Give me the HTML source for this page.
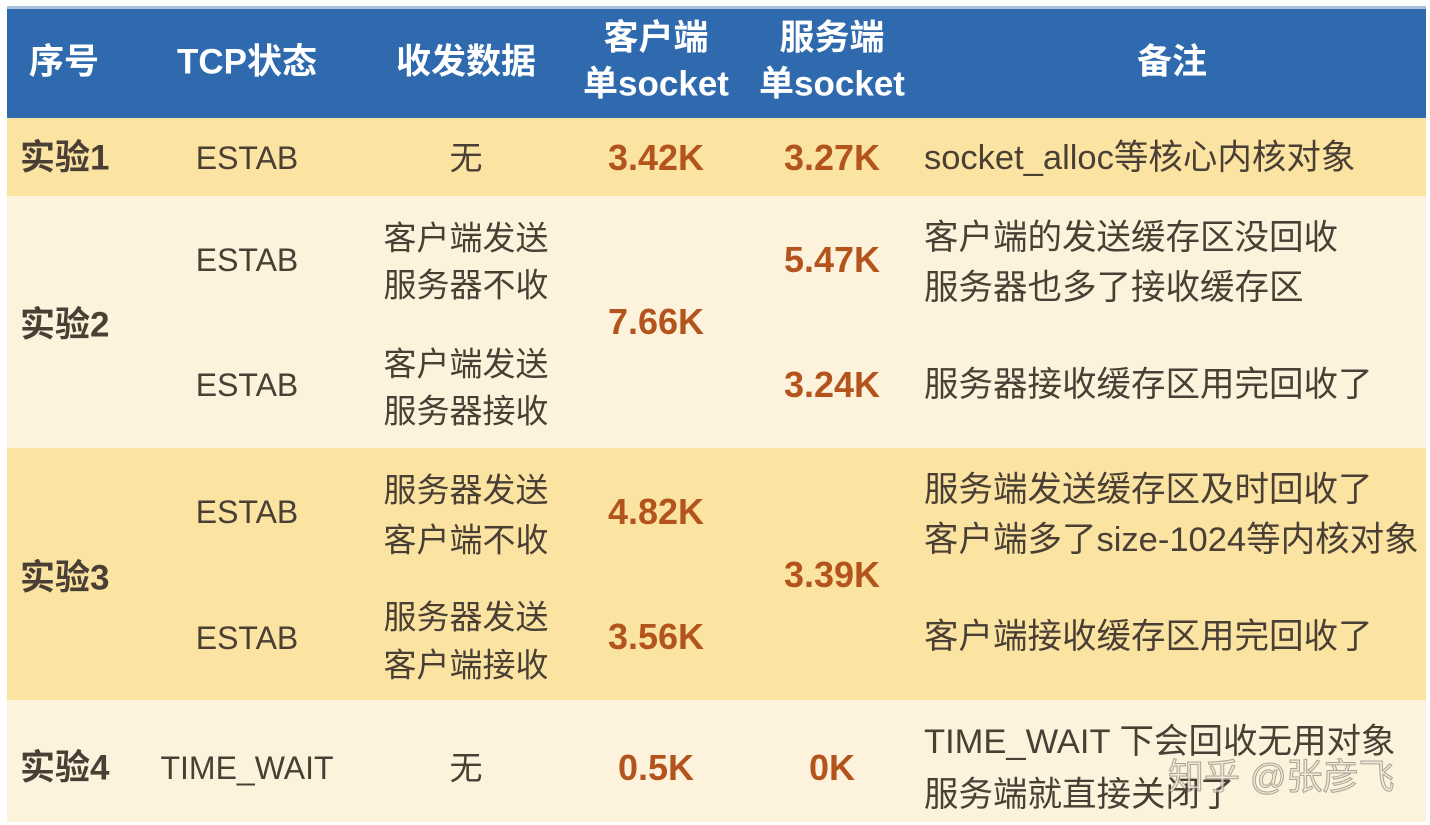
<!DOCTYPE html>
<html><head><meta charset="utf-8"><style>
body{margin:0;width:1430px;height:825px;background:#fff;position:relative;overflow:hidden;font-family:"Liberation Sans","Noto Sans CJK SC",sans-serif;}
.b{position:absolute;left:7px;width:1419px}
.t{position:absolute;white-space:nowrap;font-size:32px;color:#4a3f35;transform:translate(-50%,-50%);line-height:1}
.l{transform:translate(0,-50%);font-size:34.5px}
.c{font-size:33px}
.h{color:#fff;font-weight:bold;font-size:35px}
.n{color:#b4541d;font-weight:bold;font-size:36px}
.k{font-weight:bold;font-size:35px}
.w{position:absolute;font-size:36px;color:rgba(235,228,215,0.7);-webkit-text-stroke:1px rgba(110,100,90,0.55);left:1168px;top:748px;font-family:"Liberation Sans","Noto Sans CJK SC",sans-serif}
</style></head><body>
<div class="b" style="top:6px;height:3px;background:#a9bfdc"></div>
<div class="b" style="top:9px;height:109px;background:#2f6aae"></div>
<div class="b" style="top:118px;height:78px;background:#fbe3a2"></div>
<div class="b" style="top:196px;height:252px;background:#fdf3dc"></div>
<div class="b" style="top:448px;height:252px;background:#fbe3a2"></div>
<div class="b" style="top:700px;height:122px;background:#fdf3dc"></div>

<div class="t h" style="left:64px;top:62px">序号</div>
<div class="t h" style="left:247px;top:62px">TCP状态</div>
<div class="t h" style="left:466px;top:62px">收发数据</div>
<div class="t h" style="left:656px;top:38px">客户端</div>
<div class="t h" style="left:656px;top:84px">单socket</div>
<div class="t h" style="left:832px;top:38px">服务端</div>
<div class="t h" style="left:832px;top:84px">单socket</div>
<div class="t h" style="left:1172px;top:62px">备注</div>

<div class="t k l" style="left:20px;top:158px;font-size:35px">实验1</div>
<div class="t" style="left:247px;top:158px">ESTAB</div>
<div class="t c" style="left:466px;top:158px">无</div>
<div class="t n" style="left:656px;top:158px">3.42K</div>
<div class="t n" style="left:832px;top:158px">3.27K</div>
<div class="t l" style="left:924px;top:158px">socket_alloc等核心内核对象</div>

<div class="t k l" style="left:20px;top:325px;font-size:35px">实验2</div>
<div class="t" style="left:247px;top:260px">ESTAB</div>
<div class="t c" style="left:466px;top:238px">客户端发送</div>
<div class="t c" style="left:466px;top:285px">服务器不收</div>
<div class="t n" style="left:656px;top:322px">7.66K</div>
<div class="t n" style="left:832px;top:260px">5.47K</div>
<div class="t l" style="left:924px;top:238px">客户端的发送缓存区没回收</div>
<div class="t l" style="left:924px;top:288px">服务器也多了接收缓存区</div>
<div class="t" style="left:247px;top:385px">ESTAB</div>
<div class="t c" style="left:466px;top:364px">客户端发送</div>
<div class="t c" style="left:466px;top:411px">服务器接收</div>
<div class="t n" style="left:832px;top:385px">3.24K</div>
<div class="t l" style="left:924px;top:385px">服务器接收缓存区用完回收了</div>

<div class="t k l" style="left:20px;top:578px;font-size:35px">实验3</div>
<div class="t" style="left:247px;top:512px">ESTAB</div>
<div class="t c" style="left:466px;top:490px">服务器发送</div>
<div class="t c" style="left:466px;top:540px">客户端不收</div>
<div class="t n" style="left:656px;top:512px">4.82K</div>
<div class="t n" style="left:832px;top:575px">3.39K</div>
<div class="t l" style="left:924px;top:490px">服务端发送缓存区及时回收了</div>
<div class="t l" style="left:924px;top:540px">客户端多了size-1024等内核对象</div>
<div class="t" style="left:247px;top:638px">ESTAB</div>
<div class="t c" style="left:466px;top:617px">服务器发送</div>
<div class="t c" style="left:466px;top:665px">客户端接收</div>
<div class="t n" style="left:656px;top:637px">3.56K</div>
<div class="t l" style="left:924px;top:637px">客户端接收缓存区用完回收了</div>

<div class="t k l" style="left:20px;top:768px;font-size:35px">实验4</div>
<div class="t" style="left:247px;top:768px">TIME_WAIT</div>
<div class="t c" style="left:466px;top:768px">无</div>
<div class="t n" style="left:656px;top:768px">0.5K</div>
<div class="t n" style="left:832px;top:768px">0K</div>
<div class="t l" style="left:924px;top:742px">TIME_WAIT 下会回收无用对象</div>
<div class="t l" style="left:924px;top:795px">服务端就直接关闭了</div>
<div class="w">知乎 @张彦飞</div>
</body></html>
